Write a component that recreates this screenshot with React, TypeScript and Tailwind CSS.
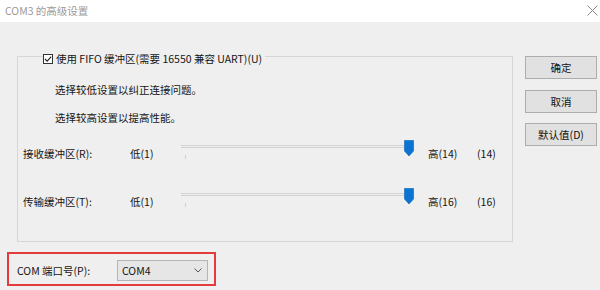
import React from "react";

const font = { fontFamily: '"Noto Sans CJK SC", "Noto Sans", sans-serif' };

function Thumb() {
  return (
    <svg width="10" height="17" viewBox="0 0 10 17" className="absolute left-[223px] top-0">
      <path d="M0.5 0.5 H9.5 V11 L5 16 L0.5 11 Z" fill="#0a74d4" stroke="#0a5fb0" strokeWidth="0.6" />
    </svg>
  );
}

function SliderRow({ label, high, value }: { label: string; high: string; value: string }) {
  return (
    <div className="flex items-start h-[22px]">
      <div className="w-[112px] pl-[5px] mt-[6px] leading-[16px] whitespace-nowrap">{label}</div>
      <div className="w-[51px] mt-[6px] leading-[16px]">低(1)</div>
      <div className="relative w-[232px] h-[22px]">
        <div className="absolute left-0 top-[5px] w-[228px] h-[3px] border-y border-[#d4d4d4] bg-[#ececec]" />
        <div className="absolute left-[4px] top-[15px] w-px h-[4px] bg-[#cfcfcf]" />
        <Thumb />
      </div>
      <div className="ml-[15px] w-[49px] mt-[6px] leading-[16px]">{high}</div>
      <div className="mt-[6px] leading-[16px]">{value}</div>
    </div>
  );
}

function Btn({ children, className = "" }: { children: React.ReactNode; className?: string }) {
  return (
    <div
      className={`w-[72px] h-[23px] flex items-center justify-center border border-[#adadad] bg-[#e1e1e1] text-[10.5px] text-[#111] ${className}`}
    >
      {children}
    </div>
  );
}

export default function App() {
  return (
    <div style={font} className="w-[600px] h-[290px] overflow-hidden flex flex-col bg-[#efefef] text-[10.5px] text-[#151515]">
      <div className="h-[22px] bg-white flex items-center justify-between pl-[5px] pr-[2px] shrink-0">
        <span className="text-[#9a9a9a] text-[10.5px] leading-[16px]">COM3 的高级设置</span>
        <svg width="11" height="11" viewBox="0 0 11 11" className="mt-[-1px]">
          <path d="M0.5 0.5 L10.5 10.5 M10.5 0.5 L0.5 10.5" stroke="#8a8a8a" strokeWidth="1" />
        </svg>
      </div>
      <div className="flex flex-1">
        <div className="w-[518px] pl-[7px] pt-[34px] flex flex-col">
          <div className="relative ml-[10px] w-[496px] h-[186px] border border-[#d6d6d6] flex flex-col">
            <div className="absolute left-[25px] top-[-6px] flex items-center bg-[#efefef] pr-[3px] h-[16px]">
              <svg width="10" height="10" viewBox="0 0 10 10" className="mr-[3px]">
                <rect x="0.5" y="0.5" width="9" height="9" fill="#fff" stroke="#333" strokeWidth="1" />
                <path d="M2 5 L4.2 7.2 L8.2 2.6" fill="none" stroke="#222" strokeWidth="1.1" />
              </svg>
              <span className="leading-[16px] whitespace-nowrap">使用 FIFO 缓冲区(需要 16550 兼容 UART)(U)</span>
            </div>
            <div className="pl-[37px] pt-[25px] leading-[16px]">选择较低设置以纠正连接问题。</div>
            <div className="pl-[37px] mt-[12px] leading-[16px]">选择较高设置以提高性能。</div>
            <div className="mt-[14px]">
              <SliderRow label="接收缓冲区(R):" high="高(14)" value="(14)" />
            </div>
            <div className="mt-[26px]">
              <SliderRow label="传输缓冲区(T):" high="高(16)" value="(16)" />
            </div>
          </div>
          <div className="mt-[10px] w-[209px] h-[34px] border-2 border-[#e43c3c] flex items-start pt-[6px] pl-[8px]">
            <div className="w-[100px] h-[21px] flex items-center leading-[16px] whitespace-nowrap">COM 端口号(P):</div>
            <div className="w-[91px] h-[21px] border border-[#b5b5b5] bg-[#e6e6e6] flex items-center justify-between pl-[4px] pr-[5px]">
              <span className="leading-[16px]">COM4</span>
              <svg width="8" height="5" viewBox="0 0 8 5">
                <path d="M0.5 0.5 L4 4 L7.5 0.5" fill="none" stroke="#555" strokeWidth="1" />
              </svg>
            </div>
          </div>
        </div>
        <div className="pl-[7px] pt-[34px] flex flex-col">
          <Btn>确定</Btn>
          <Btn className="mt-[11px]">取消</Btn>
          <Btn className="mt-[10px]">默认值(D)</Btn>
        </div>
      </div>
    </div>
  );
}
